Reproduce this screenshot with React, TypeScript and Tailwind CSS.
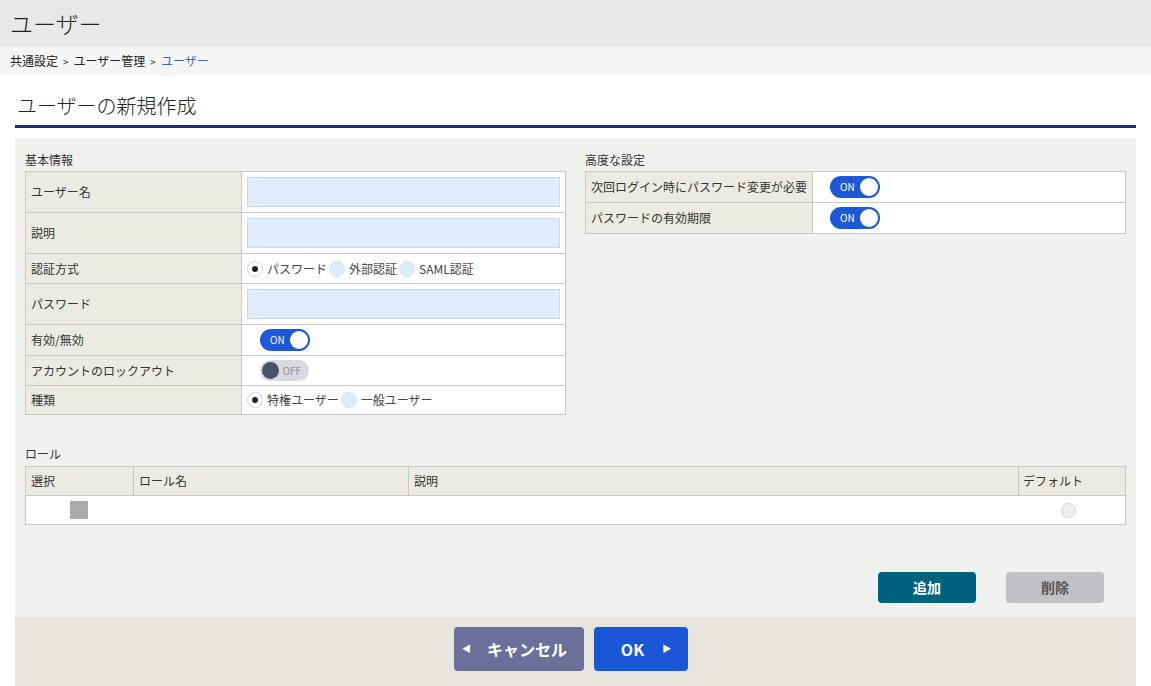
import React from 'react';

const font = { fontFamily: '"Noto Sans CJK JP", "Noto Sans", sans-serif' };

function Toggle({ on }: { on: boolean }) {
  if (on) {
    return (
      <div className="flex items-center justify-between w-[50px] h-[22px] rounded-full bg-[#1e58d6] pl-[10px] pr-[2px]">
        <span className="text-[10px] text-white leading-none">ON</span>
        <span className="w-[18px] h-[18px] rounded-full bg-white"></span>
      </div>
    );
  }
  return (
    <div className="flex items-center justify-between w-[49px] h-[21px] rounded-full bg-[#d9dae0] pl-[2px] pr-[8px]">
      <span className="w-[17px] h-[17px] rounded-full bg-[#4b5169]"></span>
      <span className="text-[10px] text-[#8a8c96] leading-none">OFF</span>
    </div>
  );
}

function Radio({ checked, label }: { checked: boolean; label: string }) {
  return (
    <span className="flex items-center gap-[4px]">
      {checked ? (
        <span className="w-[16px] h-[16px] rounded-full bg-white border border-[#d0d4da] flex items-center justify-center">
          <span className="w-[6px] h-[6px] rounded-full bg-[#222]"></span>
        </span>
      ) : (
        <span className="w-[16px] h-[16px] rounded-full bg-[#ddecfb] border border-[#d6e3f0]"></span>
      )}
      <span className="text-[#444]">{label}</span>
    </span>
  );
}

function Input() {
  return <div className="w-full h-[30px] bg-[#ddedfd] border border-[#c9d9ea]"></div>;
}

function Row({ label, children, h, labelW, last }: { label: string; children: React.ReactNode; h: string; labelW: string; last?: boolean }) {
  return (
    <div className={`flex ${h} ${last ? '' : 'border-b border-[#c8c8c8]'}`}>
      <div className={`${labelW} shrink-0 bg-[#ebebe3] border-r border-[#c8c8c8] flex items-center px-[5px] whitespace-nowrap`}>{label}</div>
      <div className="flex-1 bg-white flex items-center px-[5px]">{children}</div>
    </div>
  );
}

export default function App() {
  return (
    <div className="w-[1151px] h-[686px] bg-white text-[12px] text-[#333] overflow-hidden flex flex-col" style={font}>
      <div className="h-[47px] bg-[#e8e8e8] flex items-center px-[10px]">
        <h1 className="text-[23px] text-[#222] leading-none font-light">ユーザー</h1>
      </div>
      <div className="h-[28px] bg-[#f5f5f5] flex items-center px-[10px] text-[12px] text-[#222] gap-[5px]">
        <span>共通設定</span>
        <span className="text-[10px]">&gt;</span>
        <span>ユーザー管理</span>
        <span className="text-[10px]">&gt;</span>
        <span className="text-[#2f6eb5]">ユーザー</span>
      </div>
      <div className="mx-[15px] flex flex-col flex-1">
        <div className="h-[53px] flex items-end pb-[9px] px-[2px] border-b-[3px] border-[#1c2b6e]">
          <h2 className="text-[20px] text-[#222] leading-none font-light">ユーザーの新規作成</h2>
        </div>
        <div className="mt-[10px] bg-[#f0f0ee] flex-1 flex flex-col">
          <div className="flex gap-[19px] px-[10px] pt-[10px]">
            <div className="w-[541px]">
              <div className="h-[23px] flex items-center">基本情報</div>
              <div className="border border-[#c8c8c8]">
                <Row label="ユーザー名" h="h-[41px]" labelW="w-[216px]"><Input /></Row>
                <Row label="説明" h="h-[41px]" labelW="w-[216px]"><Input /></Row>
                <Row label="認証方式" h="h-[30px]" labelW="w-[216px]">
                  <div className="flex items-center gap-[2px]">
                    <Radio checked label="パスワード" />
                    <Radio checked={false} label="外部認証" />
                    <Radio checked={false} label="SAML認証" />
                  </div>
                </Row>
                <Row label="パスワード" h="h-[41px]" labelW="w-[216px]"><Input /></Row>
                <Row label="有効/無効" h="h-[31px]" labelW="w-[216px]">
                  <div className="pl-[13px]"><Toggle on /></div>
                </Row>
                <Row label="アカウントのロックアウト" h="h-[30px]" labelW="w-[216px]">
                  <div className="pl-[13px]"><Toggle on={false} /></div>
                </Row>
                <Row label="種類" h="h-[28px]" labelW="w-[216px]" last>
                  <div className="flex items-center gap-[2px]">
                    <Radio checked label="特権ユーザー" />
                    <Radio checked={false} label="一般ユーザー" />
                  </div>
                </Row>
              </div>
            </div>
            <div className="w-[541px]">
              <div className="h-[23px] flex items-center">高度な設定</div>
              <div className="border border-[#c8c8c8]">
                <Row label="次回ログイン時にパスワード変更が必要" h="h-[31px]" labelW="w-[227px]">
                  <div className="pl-[12px]"><Toggle on /></div>
                </Row>
                <Row label="パスワードの有効期限" h="h-[30px]" labelW="w-[227px]" last>
                  <div className="pl-[12px]"><Toggle on /></div>
                </Row>
              </div>
            </div>
          </div>

          <div className="px-[10px] mt-[27px]">
            <div className="h-[24px] flex items-center">ロール</div>
            <div className="border border-[#c8c8c8]">
              <div className="flex h-[29px] bg-[#ebebe3] border-b border-[#c8c8c8]">
                <div className="w-[108px] border-r border-[#c8c8c8] flex items-center px-[5px]">選択</div>
                <div className="w-[275px] border-r border-[#c8c8c8] flex items-center px-[5px]">ロール名</div>
                <div className="flex-1 border-r border-[#c8c8c8] flex items-center px-[5px]">説明</div>
                <div className="w-[106px] flex items-center px-[4px]">デフォルト</div>
              </div>
              <div className="flex h-[28px] bg-white items-center">
                <div className="w-[108px] flex items-center pl-[44px]">
                  <span className="w-[18px] h-[18px] bg-[#aaaaaa]"></span>
                </div>
                <div className="w-[275px]"></div>
                <div className="flex-1"></div>
                <div className="w-[106px] flex items-center pl-[42px]">
                  <span className="w-[15px] h-[15px] rounded-full bg-[#ededed] border border-[#d4d4d4]"></span>
                </div>
              </div>
            </div>
          </div>

          <div className="flex justify-end gap-[30px] pr-[32px] mt-[47px]">
            <button className="w-[98px] h-[31px] rounded-[4px] bg-[#00627f] text-white font-bold text-[14px]">追加</button>
            <button className="w-[98px] h-[31px] rounded-[4px] bg-[#c0c0c5] text-[#555] font-bold text-[14px]">削除</button>
          </div>
          <div className="flex-1"></div>
          <div className="h-[69px] bg-[#e8e4de] flex items-start justify-center gap-[10px] pt-[10px] pr-[9px]">
            <button className="w-[130px] h-[44px] rounded-[4px] bg-[#6a7099] text-white font-bold text-[16px] flex items-center pl-[8px]">
              <span className="text-[9px] mr-[16px]">◀</span>
              <span>キャンセル</span>
            </button>
            <button className="w-[94px] h-[44px] rounded-[4px] bg-[#1a56d8] text-white font-bold text-[16px] flex items-center justify-center gap-[18px] pl-[10px]">
              <span>OK</span>
              <span className="text-[9px]">▶</span>
            </button>
          </div>
        </div>
      </div>
    </div>
  );
}
